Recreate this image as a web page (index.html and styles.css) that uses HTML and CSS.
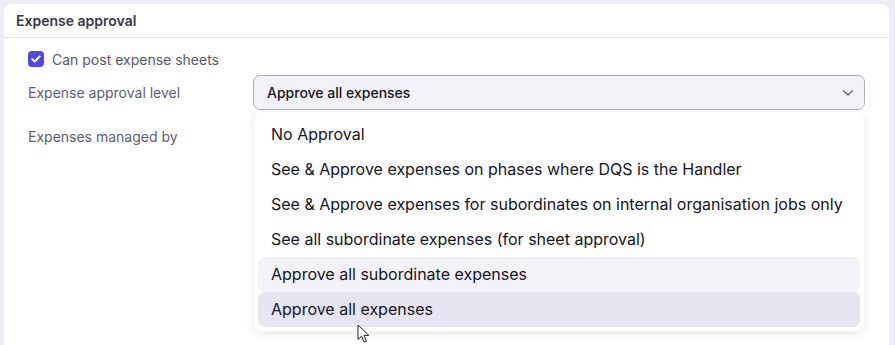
FILE: index.html
```html
<!DOCTYPE html>
<html lang="en">

<head>
    <meta charset="UTF-8">
    <meta name="viewport" content="width=device-width, initial-scale=1.0">
    <title>Expense approval</title>
    <link rel="stylesheet" href="styles.css">
</head>

<body>
    <section class="card">
        <h2 class="card-title">Expense approval</h2>

        <div class="card-body">
            <label class="check-row">
                <span class="check-box">
                    <svg width="10" height="8" viewBox="0 0 10 8"><path d="M1.3 4.2 L3.8 6.5 L8.7 1.4" fill="none" stroke="#fff" stroke-width="1.9" stroke-linecap="round" stroke-linejoin="round"/></svg>
                </span>
                Can post expense sheets
            </label>

            <div class="field-row">
                <div class="field-label">Expense approval level</div>
                <div class="select-wrap">
                    <div class="select">
                        <span>Approve all expenses</span>
                        <svg class="chevron" width="12" height="8" viewBox="0 0 12 8"><path d="M1.5 1.8 L6 6 L10.5 1.8" fill="none" stroke="#6b6a80" stroke-width="1.3" stroke-linecap="round" stroke-linejoin="round"/></svg>
                    </div>

                    <ul class="menu">
                        <li>No Approval</li>
                        <li>See &amp; Approve expenses on phases where DQS is the Handler</li>
                        <li>See &amp; Approve expenses for subordinates on internal organisation jobs only</li>
                        <li>See all subordinate expenses (for sheet approval)</li>
                        <li class="hover">Approve all subordinate expenses</li>
                        <li class="selected">Approve all expenses</li>
                    </ul>

                    <svg class="cursor" width="14" height="20" viewBox="0 0 14 20"><path d="M1 1 L1 15.5 L4.6 12.2 L7.2 18.2 L9.4 17.2 L6.9 11.4 L11.8 11.4 Z" fill="#fff" stroke="#222" stroke-width="1" stroke-linejoin="round"/></svg>
                </div>
            </div>

            <div class="field-row second">
                <div class="field-label">Expenses managed by</div>
            </div>
        </div>
    </section>
</body>

</html>
```

FILE: styles.css
```css
/* Reset */
body,
h2,
ul,
li {
    margin: 0;
    padding: 0;
}

body {
    font-family: Inter, "Noto Sans", sans-serif;
    background-color: #ededf8;
    padding: 4px 6px 0 4px;
    height: 345px;
    box-sizing: border-box;
    overflow: hidden;
}

.card {
    background-color: #fff;
    border-radius: 8px 8px 0 0;
    height: 100%;
}

.card-title {
    font-size: 14px;
    font-weight: 600;
    color: #383849;
    padding: 8px 12px 8px;
    border-bottom: 1px solid #e2e2ea;
    line-height: 17px;
}

.card-body {
    padding: 11px 24px 0 24px;
}

/* Checkbox */
.check-row {
    display: flex;
    align-items: center;
    gap: 8px;
    font-size: 14px;
    color: #585870;
    height: 20px;
}

.check-box {
    width: 16px;
    height: 16px;
    border-radius: 4px;
    background-color: #5048e5;
    display: flex;
    align-items: center;
    justify-content: center;
}

/* Field rows */
.field-row {
    display: flex;
    align-items: flex-start;
    margin-top: 6px;
}

.field-row.second {
    margin-top: 9px;
}

.field-label {
    width: 225px;
    font-size: 14px;
    color: #5e5d74;
    line-height: 35px;
}

.select-wrap {
    position: relative;
    flex: 1;
}

.select {
    height: 35px;
    box-sizing: border-box;
    background-color: #f3f2f9;
    border: 1px solid #aeadc4;
    border-radius: 7px;
    display: flex;
    align-items: center;
    justify-content: space-between;
    padding: 0 10px 0 13px;
    font-size: 14px;
    font-weight: 500;
    color: #15151f;
}

.menu {
    position: absolute;
    top: 37px;
    left: 1px;
    right: 1px;
    list-style: none;
    background-color: #fff;
    border-radius: 7px;
    padding: 5px 4px 4px;
    box-shadow: 0 2px 8px rgba(60, 60, 90, 0.12);
    z-index: 2;
}

.menu li {
    height: 35px;
    line-height: 35px;
    padding: 0 13px;
    font-size: 16px;
    color: #15151f;
    border-radius: 7px;
}

.menu li.hover {
    background-color: #f3f2f9;
}

.menu li.selected {
    background-color: #e6e5f1;
}

.cursor {
    position: absolute;
    left: 104px;
    top: 249px;
    z-index: 3;
}
```
